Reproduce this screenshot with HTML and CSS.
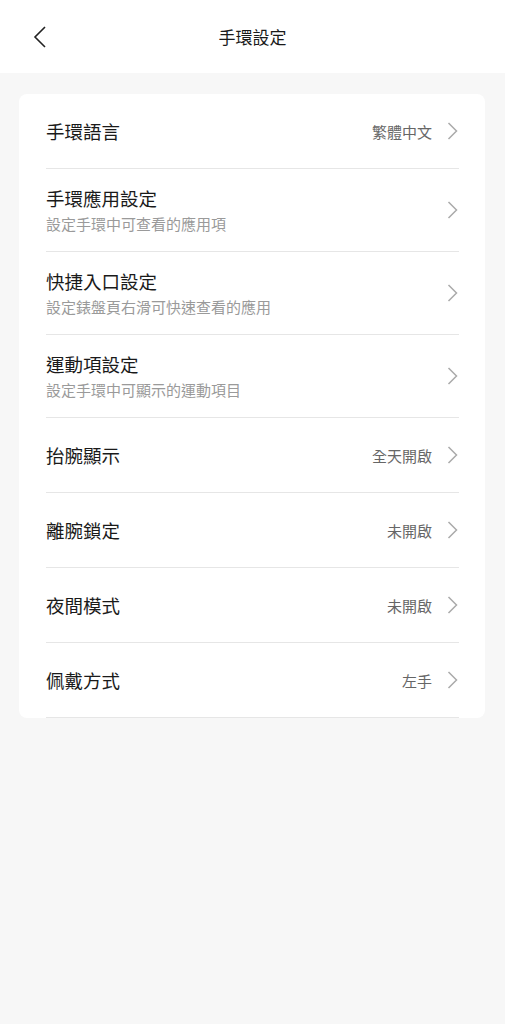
FILE: index.html
```html
<!DOCTYPE html>
<html lang="zh-Hant">
<head>
    <meta charset="UTF-8">
    <meta name="viewport" content="width=device-width, initial-scale=1.0">
    <title>手環設定</title>
    <link rel="stylesheet" href="styles.css">
</head>
<body>
    <div class="header">
        <svg class="back" width="14" height="22" viewBox="0 0 14 22">
            <polyline points="12,1 2,11 12,21" fill="none" stroke="#222" stroke-width="1.6"/>
        </svg>
        <h1>手環設定</h1>
    </div>

    <div class="main">
        <div class="card">
            <div class="row row-first">
                <div class="text"><div class="title">手環語言</div></div>
                <span class="value">繁體中文</span>
                <svg class="arrow" width="11" height="18" viewBox="0 0 11 18"><polyline points="1.5,1 9.5,9 1.5,17" fill="none" stroke="#aaa" stroke-width="1.5"/></svg>
            </div>
            <div class="row row-double">
                <div class="text">
                    <div class="title">手環應用設定</div>
                    <div class="sub">設定手環中可查看的應用項</div>
                </div>
                <svg class="arrow" width="11" height="18" viewBox="0 0 11 18"><polyline points="1.5,1 9.5,9 1.5,17" fill="none" stroke="#aaa" stroke-width="1.5"/></svg>
            </div>
            <div class="row row-double">
                <div class="text">
                    <div class="title">快捷入口設定</div>
                    <div class="sub">設定錶盤頁右滑可快速查看的應用</div>
                </div>
                <svg class="arrow" width="11" height="18" viewBox="0 0 11 18"><polyline points="1.5,1 9.5,9 1.5,17" fill="none" stroke="#aaa" stroke-width="1.5"/></svg>
            </div>
            <div class="row row-double">
                <div class="text">
                    <div class="title">運動項設定</div>
                    <div class="sub">設定手環中可顯示的運動項目</div>
                </div>
                <svg class="arrow" width="11" height="18" viewBox="0 0 11 18"><polyline points="1.5,1 9.5,9 1.5,17" fill="none" stroke="#aaa" stroke-width="1.5"/></svg>
            </div>
            <div class="row">
                <div class="text"><div class="title">抬腕顯示</div></div>
                <span class="value">全天開啟</span>
                <svg class="arrow" width="11" height="18" viewBox="0 0 11 18"><polyline points="1.5,1 9.5,9 1.5,17" fill="none" stroke="#aaa" stroke-width="1.5"/></svg>
            </div>
            <div class="row">
                <div class="text"><div class="title">離腕鎖定</div></div>
                <span class="value">未開啟</span>
                <svg class="arrow" width="11" height="18" viewBox="0 0 11 18"><polyline points="1.5,1 9.5,9 1.5,17" fill="none" stroke="#aaa" stroke-width="1.5"/></svg>
            </div>
            <div class="row">
                <div class="text"><div class="title">夜間模式</div></div>
                <span class="value">未開啟</span>
                <svg class="arrow" width="11" height="18" viewBox="0 0 11 18"><polyline points="1.5,1 9.5,9 1.5,17" fill="none" stroke="#aaa" stroke-width="1.5"/></svg>
            </div>
            <div class="row">
                <div class="text"><div class="title">佩戴方式</div></div>
                <span class="value">左手</span>
                <svg class="arrow" width="11" height="18" viewBox="0 0 11 18"><polyline points="1.5,1 9.5,9 1.5,17" fill="none" stroke="#aaa" stroke-width="1.5"/></svg>
            </div>
        </div>
    </div>
</body>
</html>
```

FILE: styles.css
```css
body {
    margin: 0;
    padding: 0;
    background-color: #f7f7f7;
    font-family: "Noto Sans CJK TC", "Noto Sans", sans-serif;
    color: #1a1a1a;
    min-height: 100vh;
}

.header {
    position: relative;
    height: 73px;
    background-color: #fff;
    display: flex;
    align-items: center;
    justify-content: center;
}

.header h1 {
    margin: 0;
    font-size: 17px;
    font-weight: normal;
    color: #1a1a1a;
}

/* back arrow sits over the header bar */
.header .back {
    position: absolute;
    left: 33px;
    top: 26px;
}

.main {
    padding: 21px 20px 0 19px;
}

.card {
    background-color: #fff;
    border-radius: 8px;
    padding: 0 26px 0 27px;
}

.row {
    display: flex;
    align-items: center;
    height: 74px;
    border-bottom: 1px solid #e6e6e6;
}

.row-double {
    height: 82px;
}

.text {
    flex: 1;
}

.title {
    font-size: 18.5px;
    line-height: 26px;
    color: #1a1a1a;
}

.sub {
    font-size: 15px;
    line-height: 22px;
    color: #9a9a9a;
    margin-top: 2px;
}

.value {
    font-size: 15px;
    color: #666;
    margin-right: 15px;
}

.arrow {
    margin-right: 1px;
}
```
